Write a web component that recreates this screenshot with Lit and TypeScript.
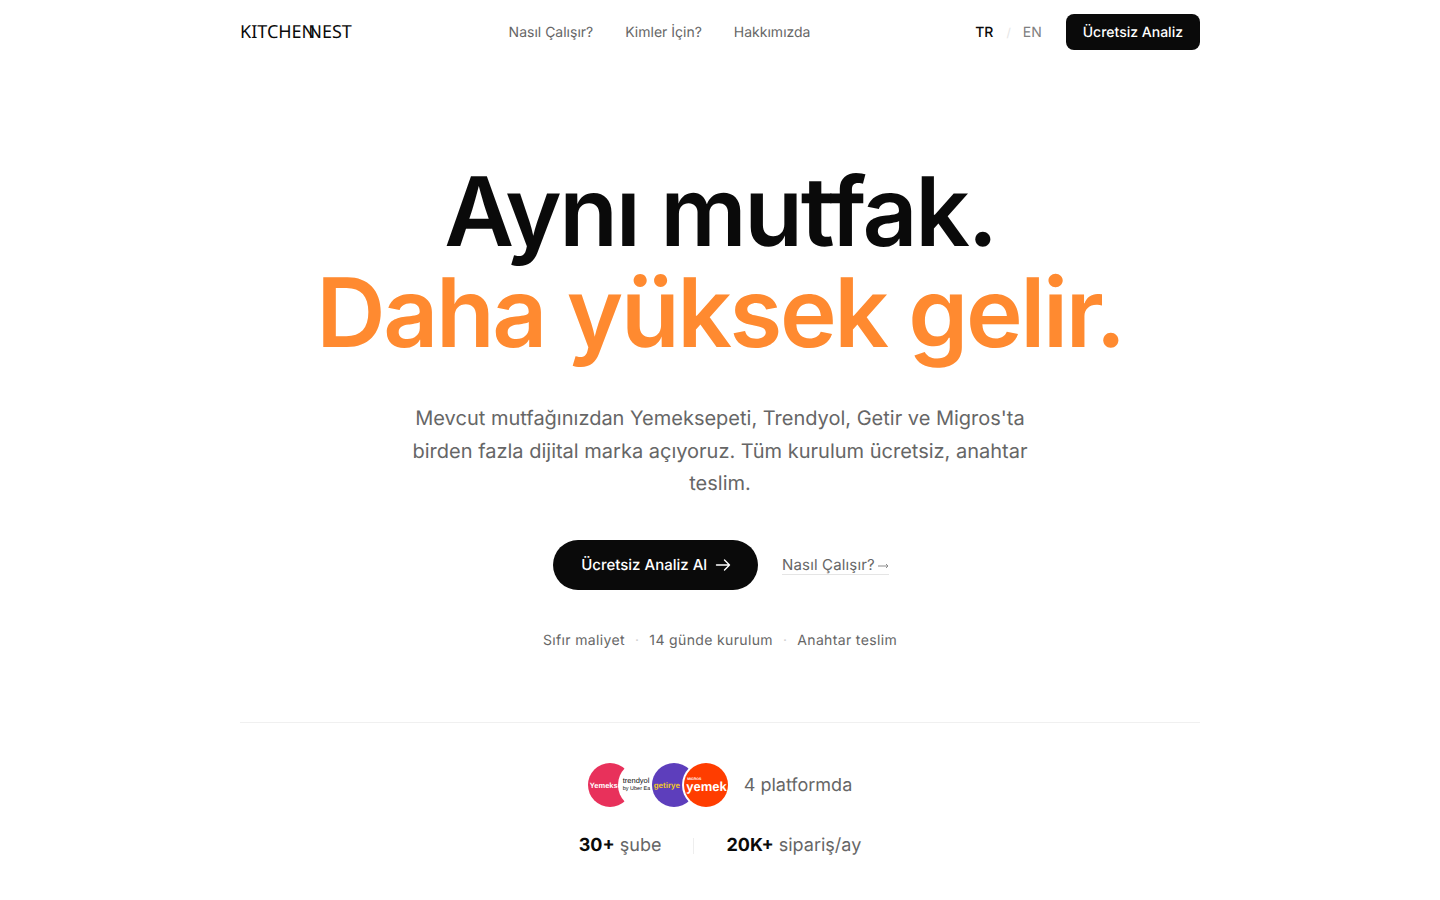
import { LitElement, html, css } from "lit";
import { customElement } from "lit/decorators.js";

@customElement("app-root")
export class AppRoot extends LitElement {
  static styles = css`
    :host { display: block; font-family: Inter, "Liberation Sans", sans-serif; color: #0a0a0a; background: #fff; min-height: 900px; text-rendering: geometricPrecision; }
    .wrap { width: 960px; margin: 0 auto; }
    nav { height: 64px; display: flex; justify-content: space-between; align-items: center; }
    .logo { font-family: "Noto Sans", sans-serif; font-size: 18px; font-weight: 400; display: flex; color: #0a0a0a; line-height: 24px; margin-right: -8px; }
    .logo .n { margin-left: -7px; }
    .links { display: flex; gap: 32px; font-size: 14px; color: #666; }
    .right { display: flex; justify-content: flex-end; align-items: center; font-size: 14px; }
    .tr { font-weight: 500; color: #0a0a0a; }
    .sl { color: #e5e5e5; margin: 0 12px 0 13px; font-size: 12px; }
    .en { color: #808080; }
    .btn-s { margin-left: 24px; height: 36px; padding: 0 17px; background: #0a0a0a; color: #fff; border-radius: 8px; display: flex; align-items: center; font-weight: 500; }
    .hero { display: flex; flex-direction: column; align-items: center; text-align: center; padding-top: 98px; }
    h1 { margin: 0; font-size: 96px; line-height: 100.8px; font-weight: 600; letter-spacing: -0.025em; }
    h1 span { display: block; }
    h1 .o { color: #ff8a30; }
    .sub { margin: 38.7px 0 0; width: 640px; font-size: 20px; line-height: 32.5px; color: #666; }
    .cta { display: flex; align-items: center; gap: 24px; margin-top: 40.3px; padding-left: 2px; }
    .btn-l { box-sizing: border-box; height: 50px; padding: 0 27px 2px 28px; border-radius: 25px; background: #0a0a0a; color: #fff; font-size: 15px; font-weight: 500; display: flex; align-items: center; gap: 8px; }
    .btn-l svg { display: block; margin-top: 2px; }
    .ghost { font-size: 15px; color: #666; border-bottom: 1px solid #e5e5e5; line-height: 19px; display: flex; align-items: center; gap: 2px; letter-spacing: 0.01em; }
    .ghost svg { display: block; margin-top: 2px; }
    .facts { display: flex; gap: 10px; margin-top: 41px; font-size: 14px; color: #666; letter-spacing: 0.025em; line-height: 20px; }
    .facts b { font-weight: 400; color: #d4d4d4; }
    .social { margin-top: 71px; border-top: 1px solid #f0f0f0; padding-top: 40px; display: flex; flex-direction: column; align-items: center; }
    .plat { display: flex; align-items: center; gap: 16px; font-size: 18px; color: #666; }
    .stack { display: flex; }
    .c { width: 44px; height: 44px; border-radius: 50%; box-shadow: 0 0 0 2px #fff; overflow: hidden; display: flex; align-items: center; justify-content: center; margin-left: -12px; position: relative; font-family: "Liberation Sans", sans-serif; white-space: nowrap; box-sizing: border-box; }
    .c:first-child { margin-left: 0; }
    .c1 { background: #e8315b; color: #fff; font-size: 7.5px; font-weight: 700; justify-content: flex-start; padding-left: 2px; }
    .c2 { background: #fff; color: #111; font-size: 7.5px; flex-direction: column; align-items: flex-start; padding-left: 3px; line-height: 8px; }
    .c2 small { font-size: 5.5px; margin-left: 0; }
    .c3 { background: #5d3ebc; color: #f0c828; font-size: 8px; font-weight: 700; justify-content: flex-start; padding-left: 2px; }
    .c4 { background: #ff3d00; color: #fff; font-size: 13px; font-weight: 700; flex-direction: column; align-items: flex-start; padding: 0 0 0 2.5px; line-height: 12px; }
    .c4 small { font-size: 3.5px; line-height: 4px; margin-left: 1px; }
    .stats { display: flex; align-items: center; gap: 32px; margin-top: 25px; font-size: 18px; color: #666; line-height: 28px; }
    .stats strong { font-weight: 700; color: #0a0a0a; }
    .bar { width: 1px; height: 16px; background: #eeeeee; }
  `;
  render() {
    return html`<div class="wrap">
      <nav>
        <div class="logo"><span>KITCHEN</span><span class="n">NEST</span></div>
        <div class="links"><span>Nasıl Çalışır?</span><span>Kimler İçin?</span><span>Hakkımızda</span></div>
        <div class="right"><span class="tr">TR</span><span class="sl">/</span><span class="en">EN</span><span class="btn-s">Ücretsiz Analiz</span></div>
      </nav>
      <section class="hero">
        <h1><span>Aynı mutfak.</span><span class="o">Daha yüksek gelir.</span></h1>
        <p class="sub">Mevcut mutfağınızdan Yemeksepeti, Trendyol, Getir ve Migros'ta birden fazla dijital marka açıyoruz. Tüm kurulum ücretsiz, anahtar teslim.</p>
        <div class="cta">
          <div class="btn-l">Ücretsiz Analiz Al <svg width="16" height="16" viewBox="0 0 16 16" fill="none" stroke="#fff" stroke-width="1.4" stroke-linecap="round" stroke-linejoin="round"><path d="M1.5 8h13M9.5 3l5 5-5 5"/></svg></div>
          <div class="ghost">Nasıl Çalışır? <svg width="12" height="12" viewBox="0 0 12 12" fill="none" stroke="#8c8c8c" stroke-width="1"><path d="M1 6h10M9 4l2 2-2 2"/></svg></div>
        </div>
        <div class="facts"><span>Sıfır maliyet</span><b>·</b><span>14 günde kurulum</span><b>·</b><span>Anahtar teslim</span></div>
      </section>
      <section class="social">
        <div class="plat">
          <div class="stack">
            <div class="c c1">Yemekse</div>
            <div class="c c2"><span>trendyol</span><small>by Uber Ea</small></div>
            <div class="c c3">getirye</div>
            <div class="c c4"><small>MIGROS</small><span>yemek</span></div>
          </div>
          <span>4 platformda</span>
        </div>
        <div class="stats"><div><strong>30+</strong> şube</div><div class="bar"></div><div><strong>20K+</strong> sipariş/ay</div></div>
      </section>
    </div>`;
  }
}
